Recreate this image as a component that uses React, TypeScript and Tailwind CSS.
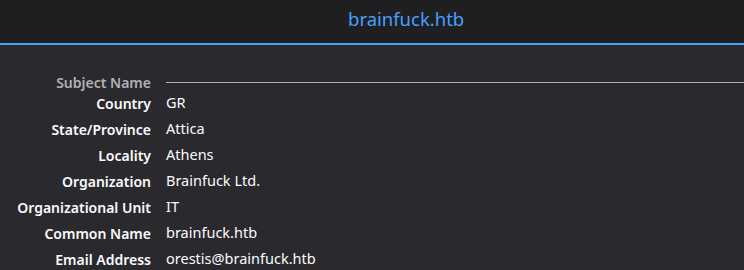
const rows: [string, string][] = [
  ['Country', 'GR'],
  ['State/Province', 'Attica'],
  ['Locality', 'Athens'],
  ['Organization', 'Brainfuck Ltd.'],
  ['Organizational Unit', 'IT'],
  ['Common Name', 'brainfuck.htb'],
  ['Email Address', 'orestis@brainfuck.htb'],
];

export default function App() {
  return (
    <div className="w-[744px] h-[270px] overflow-hidden bg-[#2a2a2e] font-['Noto_Sans',sans-serif] text-[14px]">
      {/* Tab header */}
      <div className="h-[45px] bg-[#1f1f22] border-b-2 border-[#45a1ff] flex items-center pl-[348px]">
        <span className="text-[18.5px] text-[#45a1ff] leading-none -mt-[4px]">brainfuck.htb</span>
      </div>

      <div className="pt-[29px] grid grid-cols-[151px_1fr] gap-x-[15px]">
        <div className="h-4 flex items-center justify-end font-semibold text-[#b1b1b3]">Subject Name</div>
        <div className="h-4 flex items-center">
          <div className="h-px flex-1 bg-[#b1b1b3]" />
        </div>
        {rows.map(([label, value]) => (
          <div key={label} className="contents">
            <div className="h-[26px] flex items-center justify-end font-semibold text-[#fbfbfe] whitespace-nowrap">
              {label}
            </div>
            <div className="h-[26px] flex items-center text-[14.5px] text-[#fbfbfe] whitespace-nowrap">{value}</div>
          </div>
        ))}
      </div>
    </div>
  );
}
